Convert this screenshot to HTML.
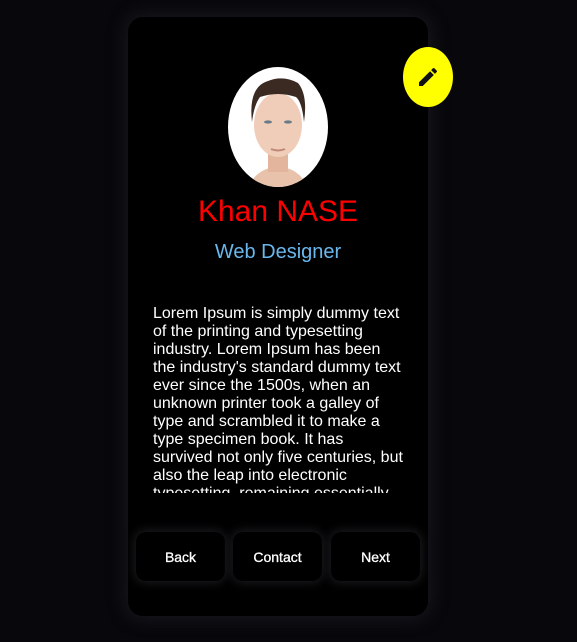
<!DOCTYPE html>
<html><head><style>
body{margin:0;width:577px;height:642px;background:#07070c;overflow:hidden;font-family:"Liberation Sans",Arial,sans-serif;position:relative}
.card{position:absolute;left:128px;top:17px;width:300px;height:599px;background:#000;border-radius:15px;box-shadow:0 0 18px 3px rgba(50,50,56,.4)}
.av{position:absolute;left:100px;top:50px;width:100px;height:120px;border-radius:50%;background:#fff;overflow:hidden}
.edit{position:absolute;left:275px;top:30px;width:50px;height:60px;border-radius:50%;background:#ff0;display:flex;align-items:center;justify-content:center}
h1{position:absolute;top:178px;left:0;width:300px;margin:0;text-align:center;color:#f00;font-weight:normal;font-size:30px}
h2{position:absolute;top:224px;left:0;width:300px;margin:0;text-align:center;color:#6ab7ee;font-weight:normal;font-size:20px}
p{position:absolute;left:25px;top:288px;width:251px;height:188px;overflow:hidden;margin:0;color:#fff;font-size:16px;line-height:18px}
.b{position:absolute;top:515px;width:89px;height:49px;border-radius:10px;background:#000;box-shadow:0 0 10px 2px rgba(30,30,34,.9);color:#fff;font-size:14px;display:flex;align-items:center;justify-content:center;-webkit-text-stroke:0.3px #fff}
</style></head><body>
<div class="card">
<div class="av"><svg width="100" height="120" viewBox="0 0 100 120">
<path d="M20 120 Q30 100 50 100 Q70 100 80 120Z" fill="#e8c2aa"/>
<rect x="40" y="80" width="20" height="25" fill="#e2b59c"/>
<ellipse cx="50" cy="58" rx="24" ry="32" fill="#f0cdb8"/>
<path d="M24 55 Q20 20 40 14 Q55 8 70 16 Q80 28 76 55 Q74 35 68 30 Q50 24 32 30 Q26 38 24 55Z" fill="#3a2a22"/>
<ellipse cx="40" cy="55" rx="4" ry="1.6" fill="#6a7a88"/><ellipse cx="60" cy="55" rx="4" ry="1.6" fill="#6a7a88"/>
<path d="M43 82 Q50 85 57 82" stroke="#c08878" stroke-width="2" fill="none"/>
</svg></div>
<div class="edit"><svg width="24" height="24" viewBox="0 0 24 24"><path d="M3 17.25V21h3.75L17.81 9.94l-3.75-3.75L3 17.25zM20.71 7.04a1 1 0 000-1.41l-2.34-2.34a1 1 0 00-1.41 0l-1.83 1.83 3.75 3.75 1.83-1.83z" fill="#111"/></svg></div>
<h1>Khan NASE</h1>
<h2>Web Designer</h2>
<p>Lorem Ipsum is simply dummy text of the printing and typesetting industry. Lorem Ipsum has been the industry's standard dummy text ever since the 1500s, when an unknown printer took a galley of type and scrambled it to make a type specimen book. It has survived not only five centuries, but also the leap into electronic typesetting, remaining essentially unchanged.</p>
<div class="b" style="left:8px">Back</div>
<div class="b" style="left:105px">Contact</div>
<div class="b" style="left:203px">Next</div>
</div>
</body></html>
